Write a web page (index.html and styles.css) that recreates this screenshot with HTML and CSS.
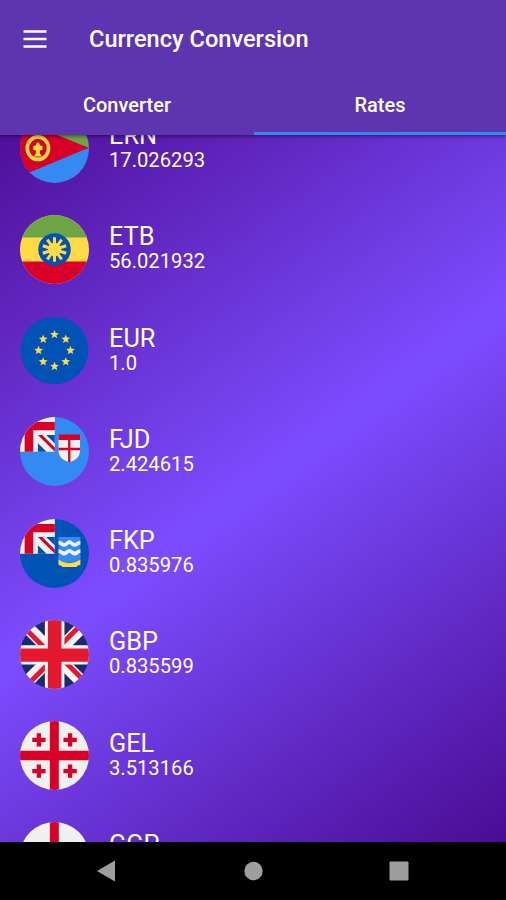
FILE: index.html
```html
<!DOCTYPE html>
<html lang="en">
<head>
<meta charset="utf-8">
<title>Currency Conversion</title>
<link rel="stylesheet" href="styles.css">
</head>
<body>
<div class="app">
  <header class="app-bar">
    <div class="toolbar">
      <svg class="menu-icon" viewBox="0 0 24 18"><path d="M0.500 1.500h23M0.500 9h23M0.500 16.500h23" stroke="#fff" stroke-width="2.700"/></svg>
      <h1 class="title">Currency Conversion</h1>
    </div>
    <nav class="tabs">
      <div class="tab">Converter</div>
      <div class="tab tab-active">Rates</div>
    </nav>
  </header>

  <main class="rates">
    <ul class="rate-list">
      <li class="rate">
        <svg class="flag" viewBox="0 0 208 208">
          <path fill="#6da544" d="M0 0h208v104H0z"/><path fill="#338af3" d="M0 104h208v104H0z"/>
          <path fill="#d80027" d="M0 20L32 31L207 102L32 175L0 190z"/>
          <ellipse cx="54" cy="103" rx="32" ry="34" fill="none" stroke="#ffda44" stroke-width="11"/>
          <path fill="#ffda44" d="M54 85q6 2 6 9l8 3v11l-8 2v8l6 10H42l6-10v-8l-8-2V97l8-3q0-7 6-9z"/>
        </svg>
        <div class="info"><div class="code">ERN</div><div class="value">17.026293</div></div>
      </li>
      <li class="rate">
        <svg class="flag" viewBox="0 0 208 208">
          <path fill="#ffda44" d="M0 0h208v208H0z"/><path fill="#6da544" d="M0 0h208v68H0z"/><path fill="#d80027" d="M0 140h208v68H0z"/>
          <circle cx="104" cy="104" r="49" fill="#0052b4"/><circle cx="104" cy="104" r="20" fill="#ffda44"/>
          <path stroke="#ffda44" stroke-width="9" d="M104 67v74M82.3 74.100l43.4 59.800M68.800 92.600l70.400 22.800M68.800 115.400l70.400-22.800M82.300 133.900l43.400-59.800"/>
        </svg>
        <div class="info"><div class="code">ETB</div><div class="value">56.021932</div></div>
      </li>
      <li class="rate">
        <svg class="flag" viewBox="0 0 208 208">
          <defs><path id="star" fill="#ffda44" d="M0-14L3.600-5L13.300-4.300L5.800 1.900L8.200 11.300L0 6.100L-8.200 11.300L-5.800 1.900L-13.300-4.300L-3.600-5z"/></defs>
          <circle cx="104" cy="104" r="102" fill="#0052b4"/>
          <use href="#star" x="104" y="56"/><use href="#star" x="138" y="70"/><use href="#star" x="152" y="104"/><use href="#star" x="138" y="138"/>
          <use href="#star" x="104" y="152"/><use href="#star" x="70" y="138"/><use href="#star" x="56" y="104"/><use href="#star" x="70" y="70"/>
        </svg>
        <div class="info"><div class="code">EUR</div><div class="value">1.0</div></div>
      </li>
      <li class="rate">
        <svg class="flag" viewBox="0 0 208 208">
          <defs>
            <g id="canton">
              <path fill="#f0f0f0" d="M0 0h105v105H0z"/>
              <path fill="#d80027" d="M14 15h91v25H40v65H14z"/>
              <path fill="#0052b4" d="M79 54h26v26zM54 79v26h26z"/>
              <path fill="#d80027" d="M54 54h13l38 38v13z"/>
            </g>
          </defs>
          <path fill="#338af3" d="M0 0h208v208H0z"/>
          <use href="#canton"/>
          <path fill="#f0f0f0" d="M116 54h65v48q0 25-32.500 35q-32.500-10-32.500-35z"/>
          <path fill="#d80027" d="M116 53h65v16h-65zM145 69h7v24h29v7h-29v36l-3.500 1l-3.500-1v-36h-29v-7h29z"/>
        </svg>
        <div class="info"><div class="code">FJD</div><div class="value">2.424615</div></div>
      </li>
      <li class="rate">
        <svg class="flag" viewBox="0 0 208 208">
          <path fill="#0052b4" d="M0 0h208v208H0z"/>
          <use href="#canton"/>
          <path fill="#338af3" d="M116 54h66v74h-66z"/>
          <path fill="#ffda44" d="M116 123q33 20 66 0v16q-9 0-12 6h-42q-3-6-12-6z"/>
          <path fill="#338af3" d="M116 110h66v12q-10 0-15 8h-36q-5-8-15-8z"/>
          <path fill="none" stroke="#f0f0f0" stroke-width="11" d="M116 71q6 0 10 4q7 6 14 0l4-3q5-4 10 0l4 3q7 6 14 0q4-4 10-4M116 97q6 0 10 4q7 6 14 0l4-3q5-4 10 0l4 3q7 6 14 0q4-4 10-4"/>
        </svg>
        <div class="info"><div class="code">FKP</div><div class="value">0.835976</div></div>
      </li>
      <li class="rate">
        <svg class="flag" viewBox="0 0 208 208">
          <path fill="#1b2a6b" d="M0 0h208v208H0z"/>
          <path stroke="#f5f5f5" stroke-width="38" d="M0 0l208 208M208 0L0 208"/>
          <path stroke="#e4192f" stroke-width="15" d="M20 30l75 75M178 20l-75 75M188 178l-75-75M30 188l75-75"/>
          <path fill="#f5f5f5" d="M75 0h59v208H75zM0 76h208v58H0z"/>
          <path fill="#e4192f" d="M84 0h41v208H84zM0 86h208v40H0z"/>
        </svg>
        <div class="info"><div class="code">GBP</div><div class="value">0.835599</div></div>
      </li>
      <li class="rate">
        <svg class="flag" viewBox="0 0 208 208">
          <defs><path id="cross" fill="#d80027" d="M-6.500-20H6.500V-6.500H20V6.500H6.500V20H-6.500V6.500H-20V-6.500H-6.500z"/></defs>
          <path fill="#f0f0f0" d="M0 0h208v208H0z"/>
          <path fill="#d80027" d="M90 0h27v208H90zM0 90h208v28H0z"/>
          <use href="#cross" x="57" y="57"/><use href="#cross" x="151" y="57"/><use href="#cross" x="57" y="151"/><use href="#cross" x="151" y="151"/>
        </svg>
        <div class="info"><div class="code">GEL</div><div class="value">3.513166</div></div>
      </li>
      <li class="rate">
        <svg class="flag" viewBox="0 0 208 208">
          <path fill="#f0f0f0" d="M0 0h208v208H0z"/>
          <path fill="#d80027" d="M90 0h27v208H90zM0 90h208v28H0z"/>
        </svg>
        <div class="info"><div class="code">GGP</div><div class="value"></div></div>
      </li>
    </ul>
  </main>

  <footer class="nav-bar">
    <svg class="nav-icon" viewBox="0 0 24 24"><path fill="#9e9e9e" d="M3 12L21 1.500v21z"/></svg>
    <svg class="nav-icon" viewBox="0 0 24 24"><circle cx="12.500" cy="12" r="9.200" fill="#9e9e9e"/></svg>
    <svg class="nav-icon" viewBox="0 0 24 24"><rect x="2.500" y="2.500" width="19" height="19" rx="1" fill="#9e9e9e"/></svg>
  </footer>
</div>
</body>
</html>
```
FILE: styles.css
```css
* {
  box-sizing: border-box;
}

body {
  margin: 0;
  font-family: Roboto, "Liberation Sans", sans-serif;
  color: #fff;
}

.app {
  display: flex;
  flex-direction: column;
  height: 900px;
  overflow: hidden;
  background: #000;
}

.app-bar {
  position: relative;
  z-index: 1;
  flex: none;
  height: 135px;
  background: #5e35b1;
  box-shadow: 0 1px 4px rgba(0, 0, 0, 0.55);
}

.toolbar {
  display: flex;
  align-items: center;
  gap: 42px;
  height: 77px;
  padding-left: 23px;
}

.menu-icon {
  width: 24px;
  height: 18px;
}

.title {
  margin: 0;
  font-size: 23.6px;
  font-weight: 500;
}

.tabs {
  display: grid;
  grid-template-columns: 254px 252px;
  height: 58px;
}

.tab {
  padding-top: 16px;
  line-height: 24px;
  text-align: center;
  font-size: 20px;
  font-weight: 500;
}

.tab-active {
  border-bottom: 3px solid #2f8af2;
}

.rates {
  flex: 1;
  min-height: 0;
  overflow: hidden;
  background: linear-gradient(144.4deg, #4f0f99 0%, #7c4dff 50%, #4a0c94 100%);
}

.rate-list {
  margin: -37.6px 0 0;
  padding: 0;
  list-style: none;
}

.rate {
  display: flex;
  align-items: center;
  gap: 20px;
  height: 101.25px;
  padding-left: 20px;
}

.flag {
  width: 69px;
  height: 69px;
  border-radius: 50%;
}

.code {
  font-size: 25.3px;
  line-height: 27px;
}

.value {
  height: 25px;
  font-size: 20.2px;
  line-height: 23px;
}

.nav-bar {
  display: flex;
  flex: none;
  justify-content: space-between;
  align-items: center;
  height: 58px;
  padding: 0 95px 0 94px;
  background: #000;
}

.nav-icon {
  width: 24px;
  height: 24px;
}
```
